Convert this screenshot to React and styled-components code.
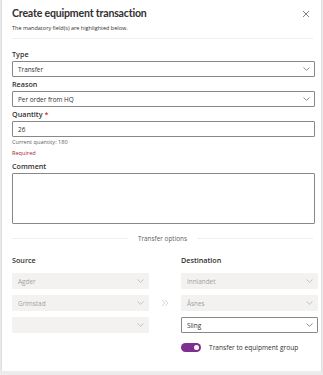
import React from "react";
import styled, { createGlobalStyle } from "styled-components";

const Global = createGlobalStyle`
  html, body {
    margin: 0;
    padding: 0;
    background: #ececec;
  }
  * { box-sizing: border-box; }
`;

const Card = styled.div`
  width: 319px;
  height: 371px;
  margin-left: 2px;
  background: #fff;
  box-shadow: 0 0 2px rgba(0, 0, 0, 0.18);
  font-family: "Open Sans", "Noto Sans", sans-serif;
  color: #323130;
  padding: 0 6px 0 10px;
  display: flex;
  flex-direction: column;
`;

const Header = styled.div`
  display: flex;
  justify-content: space-between;
  align-items: flex-start;
  padding-top: 5px;
`;

const Title = styled.h1`
  margin: 0;
  font-family: Lato, "Open Sans", sans-serif;
  font-size: 10.6px;
  line-height: 16px;
  font-weight: 700;
  letter-spacing: -0.2px;
`;

const Close = styled.button`
  border: 0;
  background: none;
  padding: 0;
  margin: 5px 5px 0 0;
  width: 8px;
  height: 8px;
  display: flex;
`;

const Subtitle = styled.p`
  margin: 2px 0 0;
  font-size: 5.5px;
  line-height: 10px;
  color: #323130;
`;

const Divider = styled.div`
  height: 1px;
  background: #efefef;
  margin: 5px 2px 8px 0;
`;

const Label = styled.div`
  font-size: 7.2px;
  font-weight: 600;
  line-height: 14px;
  height: 14px;
  color: #323130;
  span { color: #c4314b; }
`;

const Box = styled.div`
  height: ${(p) => p.$h || 16}px;
  border: 1px solid ${(p) => (p.$disabled ? "#f3f2f1" : "#8a8886")};
  background: ${(p) => (p.$disabled ? "#f3f2f1" : "#fff")};
  border-radius: 1px;
  display: flex;
  align-items: center;
  justify-content: space-between;
  padding: 0 4px 0 5px;
  font-size: 6.4px;
  color: ${(p) => (p.$disabled ? "#a19f9d" : "#323130")};
`;

const Help = styled.div`
  font-size: 5.6px;
  line-height: 11px;
  color: ${(p) => (p.$error ? "#a4262c" : "#605e5c")};
  &:first-of-type { margin-top: 1px; }
`;

const Separator = styled.div`
  display: flex;
  align-items: center;
  gap: 10px;
  margin: 10px 2px 0 0;
  font-size: 6.4px;
  color: #605e5c;
  &::before, &::after {
    content: "";
    flex: 1;
    height: 1px;
    background: #efefef;
  }
`;

const Columns = styled.div`
  display: grid;
  grid-template-columns: 137px 32px 137px;
  margin-top: 10px;
`;

const Column = styled.div`
  display: flex;
  flex-direction: column;
  gap: 6px;
`;

const Arrows = styled.div`
  display: flex;
  justify-content: center;
  padding-top: 46px;
`;

const ToggleRow = styled.div`
  display: flex;
  align-items: center;
  gap: 8px;
  margin-top: 4px;
  font-size: 6.6px;
  color: #323130;
`;

const Toggle = styled.div`
  width: 20px;
  height: 9px;
  border-radius: 5px;
  background: #7e2d90;
  position: relative;
  &::after {
    content: "";
    position: absolute;
    right: 2px;
    top: 2px;
    width: 5px;
    height: 5px;
    border-radius: 50%;
    background: #fff;
  }
`;

const Chevron = ({ light }) => (
  <svg width="7" height="4" viewBox="0 0 7 4">
    <path d="M0.5 0.5 L3.5 3.3 L6.5 0.5" fill="none" stroke={light ? "#b3b0ad" : "#605e5c"} strokeWidth="0.7" />
  </svg>
);

const Select = ({ value, disabled }) => (
  <Box $disabled={disabled}>
    <span>{value}</span>
    <Chevron light={disabled} />
  </Box>
);

const Field = styled.div`
  display: flex;
  flex-direction: column;
`;

export default function App() {
  return (
    <>
      <Global />
      <Card>
        <Header>
          <Title>Create equipment transaction</Title>
          <Close>
            <svg width="8" height="8" viewBox="0 0 8 8">
              <path d="M1 1 L7 7 M7 1 L1 7" stroke="#605e5c" strokeWidth="0.8" />
            </svg>
          </Close>
        </Header>
        <Subtitle>The mandatory field(s) are highlighted below.</Subtitle>
        <Divider />
        <Field>
          <Label>Type</Label>
          <Select value="Transfer" />
        </Field>
        <Field>
          <Label>Reason</Label>
          <Select value="Per order from HQ" />
        </Field>
        <Field>
          <Label>Quantity <span>*</span></Label>
          <Box $h={16}>26</Box>
          <Help>Current quantity: 180</Help>
          <Help $error>Required</Help>
        </Field>
        <Field>
          <Label>Comment</Label>
          <Box $h={51} />
        </Field>
        <Separator>Transfer options</Separator>
        <Columns>
          <Column>
            <Label>Source</Label>
            <Select value="Agder" disabled />
            <Select value="Grimstad" disabled />
            <Select value="" disabled />
          </Column>
          <Arrows>
            <svg width="8" height="8" viewBox="0 0 8 8">
              <path d="M0.8 0.8 L3.8 4 L0.8 7.2 M4 0.8 L7 4 L4 7.2" fill="none" stroke="#c8c6c4" strokeWidth="0.7" />
            </svg>
          </Arrows>
          <Column>
            <Label>Destination</Label>
            <Select value="Innlandet" disabled />
            <Select value="Åsnes" disabled />
            <Select value="Sling" />
            <ToggleRow>
              <Toggle />
              Transfer to equipment group
            </ToggleRow>
          </Column>
        </Columns>
      </Card>
    </>
  );
}
